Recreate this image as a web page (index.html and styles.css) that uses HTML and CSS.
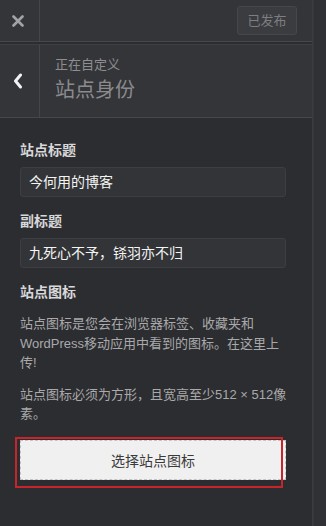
FILE: index.html
```html
<!DOCTYPE html>
<html lang="zh-CN">
<head>
    <meta charset="UTF-8">
    <meta name="viewport" content="width=device-width, initial-scale=1.0">
    <title>站点身份</title>
    <link rel="stylesheet" href="styles.css">
</head>
<body>

<div class="frame">
    <div class="panel">
        <div class="topbar">
            <div class="close">
                <svg width="12" height="12" viewBox="0 0 12 12"><path d="M1.5 1.5 L10.5 10.5 M10.5 1.5 L1.5 10.5" stroke="#a3a3a5" stroke-width="2.6" stroke-linecap="round"/></svg>
            </div>
            <div class="publish">已发布</div>
        </div>

        <div class="sectionHead">
            <div class="back">
                <svg width="10" height="16" viewBox="0 0 10 16"><path d="M7.5 2 L2.5 8 L7.5 14" stroke="#f2f2f2" stroke-width="3" fill="none" stroke-linecap="round" stroke-linejoin="round"/></svg>
            </div>
            <div class="sectionTitle">
                <span class="crumb">正在自定义</span>
                <span class="heading">站点身份</span>
            </div>
        </div>

        <div class="content">
            <label class="fieldLabel">站点标题</label>
            <div class="field">今何用的博客</div>

            <label class="fieldLabel">副标题</label>
            <div class="field">九死心不予，铩羽亦不归</div>

            <label class="fieldLabel">站点图标</label>
            <p class="desc">站点图标是您会在浏览器标签、收藏夹和WordPress移动应用中看到的图标。在这里上传!</p>
            <p class="desc">站点图标必须为方形，且宽高至少512 × 512像素。</p>

            <div class="iconWrap">
                <button class="pickBtn">选择站点图标</button>
                <div class="mark"></div>
            </div>
        </div>
    </div>
    <div class="edge"></div>
</div>

</body>
</html>
```

FILE: styles.css
```css
html, body {
    margin: 0;
    padding: 0;
    height: 100%;
}
body {
    font-family: "Liberation Sans", "Noto Sans CJK SC", sans-serif;
    background-color: #2d2e31;
}
.frame {
    display: flex;
    height: 526px;
}
.panel {
    width: 312px;
    border-right: 1px solid #3b3c40;
    background-color: #2c2d30;
}
.edge {
    flex: 1;
    background-color: #303134;
    border-left: 1px solid #36373b;
}
.topbar {
    display: flex;
    align-items: center;
    height: 41px;
    border-bottom: 1px solid #46474b;
    background-color: #343539;
}
.close {
    width: 40px;
    height: 41px;
    border-right: 1px solid #45464a;
    display: flex;
    align-items: center;
    justify-content: center;
    box-sizing: border-box;
    padding-right: 3px;
}
.publish {
    margin-left: auto;
    margin-right: 15px;
    width: 60px;
    height: 29px;
    box-sizing: border-box;
    border: 1px solid #46474b;
    border-radius: 3px;
    background-color: #3b3c40;
    color: #7d7e81;
    font-size: 13px;
    line-height: 27px;
    text-align: center;
}
.sectionHead {
    display: flex;
    height: 72px;
    margin-top: 2px;
    border-top: 1px solid #3e3f43;
    border-bottom: 1px solid #46474b;
    background-color: #343539;
}
.back {
    width: 40px;
    border-right: 1px solid #45464a;
    display: flex;
    align-items: center;
    justify-content: center;
    padding-right: 3px;
    box-sizing: border-box;
}
.sectionTitle {
    display: flex;
    flex-direction: column;
    padding: 10px 0 0 15px;
}
.crumb {
    font-size: 13px;
    line-height: 20px;
    color: #8e8e90;
}
.heading {
    font-size: 20px;
    line-height: 30px;
    color: #8b8b8d;
}
.content {
    padding: 22px 26px 0 20px;
}
.fieldLabel {
    display: block;
    font-size: 14px;
    font-weight: bold;
    line-height: 20px;
    color: #d8d8da;
    margin-bottom: 7px;
}
.field {
    height: 30px;
    box-sizing: border-box;
    border: 1px solid #3d3e42;
    border-radius: 3px;
    background-color: #333437;
    color: #f4f4f4;
    font-size: 14px;
    line-height: 28px;
    padding-left: 8px;
    margin-bottom: 14px;
}
.desc {
    margin: 12px -6px 0 0;
    font-size: 13px;
    line-height: 19.5px;
    color: #a9a9ab;
}
.desc + .desc {
    margin-top: 12px;
}
.iconWrap {
    position: relative;
    margin-top: 16px;
}
.pickBtn {
    display: block;
    width: 100%;
    height: 40px;
    border: 1px dashed #c4c4c4;
    border-radius: 0;
    background-color: #f0f0f1;
    color: #3a3a3a;
    font-family: inherit;
    font-size: 14px;
}
.mark {
    position: absolute;
    left: -5px;
    top: -3px;
    width: 268px;
    height: 51px;
    border: 2px solid #c8242c;
    box-sizing: border-box;
}
```
